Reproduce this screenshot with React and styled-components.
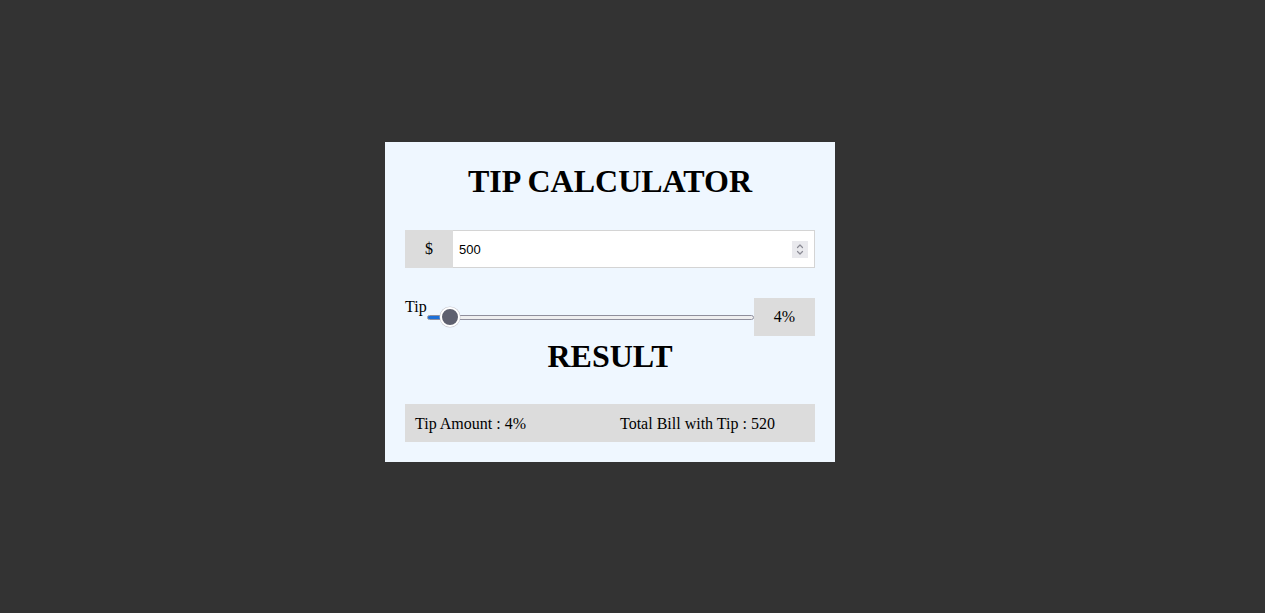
import React, { useState } from "react";
import styled, { createGlobalStyle } from "styled-components";

const Global = createGlobalStyle`
  html, body { margin: 0; padding: 0; background: #333333; }
  body { font-family: "Liberation Serif", "Times New Roman", serif; font-size: 16px; color: #000; }
`;

const Page = styled.div`
  min-height: 613px;
  box-sizing: border-box;
  padding: 142px 0 0 385px;
`;

const Card = styled.div`
  width: 450px;
  box-sizing: border-box;
  background: #eff7ff;
  padding: 21px 20px 20px;
  display: flex;
  flex-direction: column;
`;

const Heading = styled.h1`
  margin: ${(p) => p.$top}px 0 ${(p) => p.$gap}px;
  font-size: 32px;
  font-weight: bold;
  text-align: center;
  line-height: 37px;
`;

const InputRow = styled.div`
  display: flex;
  height: 38px;
  margin-bottom: 30px;
`;

const Addon = styled.div`
  width: 48px;
  background: #dcdcdc;
  display: flex;
  align-items: center;
  justify-content: center;
  font-size: 16px;
`;

const Field = styled.div`
  flex: 1;
  display: flex;
  align-items: center;
  background: #fff;
  border: 1px solid #d4d4d4;
  border-left: none;
  padding: 0 6px 0 6px;
`;

const NumberInput = styled.input`
  flex: 1;
  border: none;
  outline: none;
  background: transparent;
  font-family: "Liberation Sans", Arial, sans-serif;
  font-size: 13px;
  padding: 0;
  -moz-appearance: textfield;
  &::-webkit-inner-spin-button,
  &::-webkit-outer-spin-button {
    -webkit-appearance: none;
    margin: 0;
  }
`;

const Spinner = styled.div`
  width: 16px;
  height: 17px;
  background: #e9e9ed;
  display: flex;
  align-items: center;
  justify-content: center;
`;

const SliderRow = styled.div`
  display: flex;
  align-items: flex-start;
  height: 38px;
`;

const TipLabel = styled.label`
  font-size: 16px;
  line-height: 18px;
`;

const Range = styled.input`
  -webkit-appearance: none;
  appearance: none;
  flex: 1;
  align-self: center;
  margin: 0;
  height: 22px;
  background: transparent;
  outline: none;
  &::-webkit-slider-runnable-track {
    height: 5px;
    border: 1px solid #8f8f9d;
    border-radius: 3px;
    box-sizing: border-box;
    background: linear-gradient(
      to right,
      #1b6fd8 0,
      #1b6fd8 ${(p) => p.$fill}%,
      #efeff0 ${(p) => p.$fill}%,
      #efeff0 100%
    );
  }
  &::-webkit-slider-thumb {
    -webkit-appearance: none;
    appearance: none;
    width: 20px;
    height: 20px;
    border-radius: 50%;
    background: #5e606f;
    border: 2px solid #fff;
    box-sizing: border-box;
    margin-top: -8.5px;
    box-shadow: 0 0 0 0.5px #c8c8d0;
  }
`;

const Badge = styled.div`
  width: 61px;
  height: 38px;
  background: #dcdcdc;
  display: flex;
  align-items: center;
  justify-content: center;
  font-size: 16px;
`;

const ResultBox = styled.div`
  display: flex;
  height: 38px;
  align-items: center;
  background: #dcdcdc;
`;

const ResultItem = styled.span`
  flex: 1;
  padding: 0 10px;
  font-size: 16px;
  line-height: 18px;
  margin-top: 1px;
`;

export default function App() {
  const [bill, setBill] = useState(500);
  const [tip, setTip] = useState(4);
  const total = Math.round(Number(bill) * (1 + tip / 100));
  const fill = 3.1 + tip * 0.94;

  return (
    <>
      <Global />
      <Page>
        <Card>
          <Heading $top={0} $gap={30}>TIP CALCULATOR</Heading>
          <InputRow>
            <Addon>$</Addon>
            <Field>
              <NumberInput
                type="number"
                value={bill}
                onChange={(e) => setBill(e.target.value)}
              />
              <Spinner>
                <svg width="10" height="13" viewBox="0 0 10 13" fill="none" stroke="#8a8a94" strokeWidth="1.2" strokeLinecap="round" strokeLinejoin="round">
                  <path d="M2.5 4.5 L5 2 L7.5 4.5" />
                  <path d="M2.5 8.5 L5 11 L7.5 8.5" />
                </svg>
              </Spinner>
            </Field>
          </InputRow>
          <SliderRow>
            <TipLabel htmlFor="tip">Tip</TipLabel>
            <Range
              id="tip"
              type="range"
              min="0"
              max="100"
              value={tip}
              $fill={fill}
              onChange={(e) => setTip(Number(e.target.value))}
            />
            <Badge>{tip}%</Badge>
          </SliderRow>
          <Heading $top={2} $gap={29}>RESULT</Heading>
          <ResultBox>
            <ResultItem>Tip Amount : {tip}%</ResultItem>
            <ResultItem>Total Bill with Tip : {total}</ResultItem>
          </ResultBox>
        </Card>
      </Page>
    </>
  );
}
